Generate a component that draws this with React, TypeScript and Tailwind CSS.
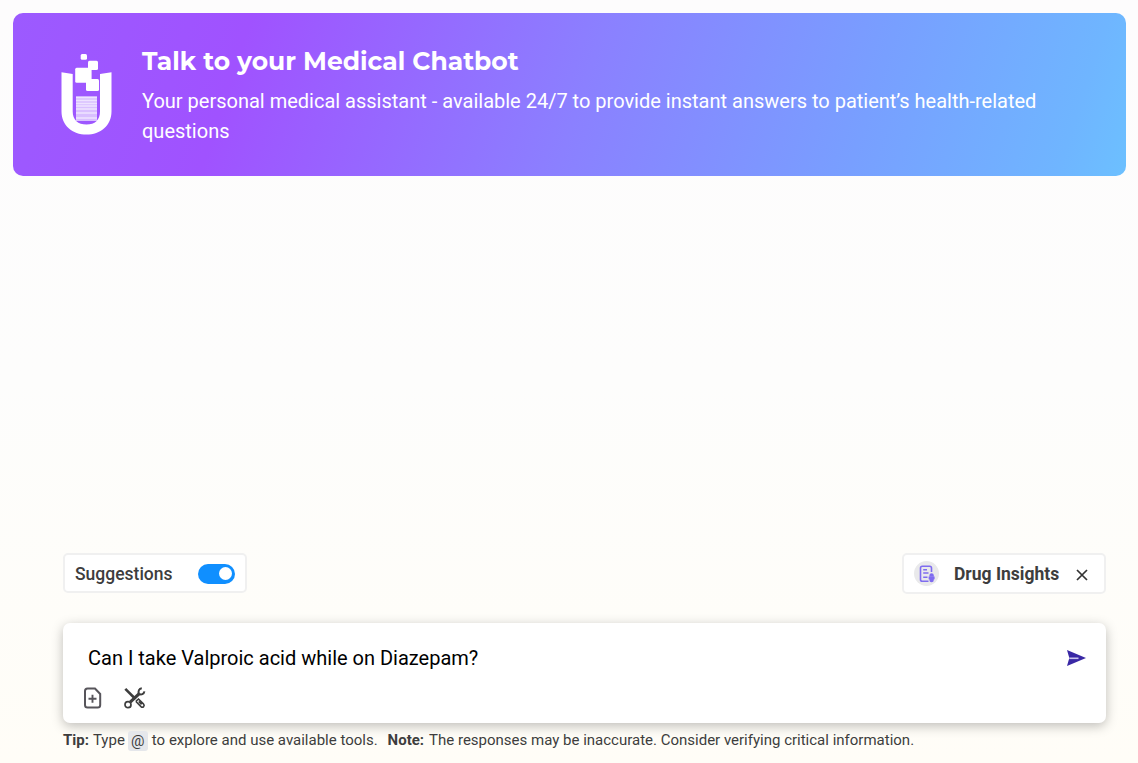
function Logo() {
  return (
    <svg className="h-[82px] w-[52px] shrink-0" viewBox="0 0 52 82" fill="none">
      <path d="M1.5 18.2L12.7 19.9V57.5C12.7 66 18 70.5 26.5 70.5S40 66 40 57.5V19.9L51.5 18.2V57.5C51.5 71.5 40.5 80.6 26.5 80.6S1.5 71.5 1.5 57.5Z" fill="white" />
      <path d="M16 42.3H37V67H16Z" fill="#d9c0ff" />
      <path d="M16 43.5H37M16 46.5H37M16 49.5H37M16 52H37M16 55H37M16 59H37M16 64H37" stroke="#eee3ff" strokeWidth="1.3" />
      <rect x="20.7" y="0" width="6.3" height="5.7" rx="1.5" fill="white" />
      <rect x="28" y="6.7" width="10" height="9.3" rx="1.5" fill="white" />
      <rect x="15.2" y="13.8" width="16.4" height="15" rx="1.5" fill="white" />
      <rect x="26" y="25" width="13" height="12" rx="1.5" fill="white" />
    </svg>
  );
}

function DrugIcon() {
  return (
    <span className="flex size-[25px] shrink-0 items-center justify-center rounded-full bg-[#e9e9eb]">
      <svg className="size-[18px]" viewBox="0 0 18 18" fill="none" stroke="#7f6cf0" strokeWidth="1.6">
        <path d="M13.5 7V3Q13.5 1.2 11.7 1.2H4.3Q2.5 1.2 2.5 3V14.4Q2.5 16.2 4.3 16.2H10.5" />
        <path d="M5.2 4.8H9M5.2 8H10.5M5.2 12.2H9.5" strokeWidth="1.4" />
        <path d="M11.4 11.8V10.3Q11.4 8.2 13.6 8.2T15.8 10.3V11.8ZM11.4 14V15Q11.4 17.2 13.6 17.2T15.8 15V14Z" fill="#7f6cf0" stroke="none" />
        <path d="M10.6 12.9H16.6" strokeWidth="2.8" />
      </svg>
    </span>
  );
}

function FileAddIcon() {
  return (
    <svg className="h-[22px] w-[18px]" viewBox="0 0 18 22" fill="none" stroke="#57555b" strokeWidth="2">
      <path d="M3.5 1.5H11L16.2 7V18Q16.2 20.5 13.7 20.5H3.5Q1 20.5 1 18V4Q1 1.5 3.5 1.5Z" />
      <path d="M8.5 7.8V15.8M4.5 11.8H12.5" strokeWidth="1.9" />
    </svg>
  );
}

function ToolsIcon() {
  return (
    <svg className="h-[22px] w-[22px]" viewBox="0 0 22 22" fill="none" stroke="#3d3d3d">
      <path d="M1.3 1.8L11.5 12" strokeWidth="2.6" />
      <path d="M6.2 15.2L15 6.8" strokeWidth="3.2" />
      <path d="M17.8 1.3C15 1.6 13.9 4 14.9 6.8C17.3 8.2 20 7 20.4 4.4" strokeWidth="2" />
      <circle cx="4" cy="17.7" r="3" strokeWidth="1.7" />
      <path d="M12.4 13.8L14.5 12L19.4 16.9Q20.8 18.3 19.6 19.6T17 19.6L12.4 15ZM14.7 14.5L17.6 17.4" strokeWidth="1.6" />
    </svg>
  );
}

function Banner() {
  return (
    <header className="flex h-[163px] w-[1113px] rounded-[10px] bg-[linear-gradient(108deg,#9c5aff_0%,#a052ff_20.5%,#8b80ff_51%,#789fff_76%,#6fb5ff_94%,#6cc0ff_100%)] pl-[47px] text-white">
      <div className="pt-[41px]"><Logo /></div>
      <div className="ml-[30px] pt-[31px]">
        <h1 className="h-[42px] whitespace-nowrap font-['Montserrat',sans-serif] text-[25px] leading-[34px] font-bold">
          Talk to your Medical Chatbot
        </h1>
        <p className="w-[930px] text-[20px] leading-[30px]">
          Your personal medical assistant - available 24/7 to provide instant answers to patient’s health-related questions
        </p>
      </div>
    </header>
  );
}

export default function App() {
  return (
    <main className="flex h-[763px] w-[1138px] flex-col overflow-hidden bg-linear-to-b from-[#fdfcfd] via-[#fdfdfc] to-[#fffdf7] px-[13px] pt-[13px] font-['Roboto',sans-serif] text-[#3d3d3d]">
      <Banner />
      <section className="mt-[377px] ml-[50px] flex w-[1043px] items-start justify-between">
        <div className="flex h-10 w-[184px] items-center justify-between rounded-[5px] border-2 border-[#f0f0f0] bg-white pr-[10px] pl-[10px] text-[17.5px] font-medium">
          <span className="pt-0.5">Suggestions</span>
          <button aria-label="Suggestions" className="mt-px flex h-5 w-[37px] items-center justify-end rounded-full bg-[#108fff] pr-[3px]">
            <span className="size-[13px] rounded-full bg-white" />
          </button>
        </div>
        <div className="flex h-[41px] w-[204px] items-center rounded-[5px] border-2 border-[#f0f0f0] bg-white pl-[10px] text-[17.5px]">
          <DrugIcon />
          <span className="ml-[15px] pt-0.5 whitespace-nowrap font-bold">Drug Insights</span>
          <svg className="mt-0.5 ml-[17px] size-3 shrink-0" viewBox="0 0 12 12" fill="none" stroke="#333" strokeWidth="1.7">
            <path d="M1 1L11 11M11 1L1 11" />
          </svg>
        </div>
      </section>
      <section className="mt-[29px] ml-[50px] h-[100px] w-[1043px] shrink-0 rounded-[7px] bg-white shadow-[0_3px_12px_rgba(0,0,0,0.26)]">
        <div className="flex items-start justify-between pt-5 pr-5 pl-[25px]">
          <p className="text-[20px] leading-[30px] text-black">Can I take Valproic acid while on Diazepam?</p>
          <svg className="mt-[7px] h-4 w-[19px]" viewBox="0 0 19 16">
            <path d="M0 0L19 8L0 16L2.3 8Z" fill="#3928a5" />
            <path d="M2.3 8.3H11.5" stroke="#c9c3ed" strokeWidth="1.6" />
          </svg>
        </div>
        <div className="flex gap-[22px] pt-[14px] pl-[21px]">
          <FileAddIcon />
          <ToolsIcon />
        </div>
      </section>
      <footer className="mt-[6px] ml-[50px] flex h-[22px] shrink-0 items-center whitespace-nowrap text-[15px]">
        <strong>Tip:</strong>
        <span className="ml-[4px]">Type</span>
        <span className="mt-0.5 ml-[3px] flex h-5 w-5 items-center justify-center rounded-[3px] bg-[#e5e7eb]">@</span>
        <span className="ml-[4px]">to explore and use available tools.</span>
        <strong className="ml-[10px]">Note:</strong>
        <span className="ml-[5px]">The responses may be inaccurate. Consider verifying critical information.</span>
      </footer>
    </main>
  );
}
